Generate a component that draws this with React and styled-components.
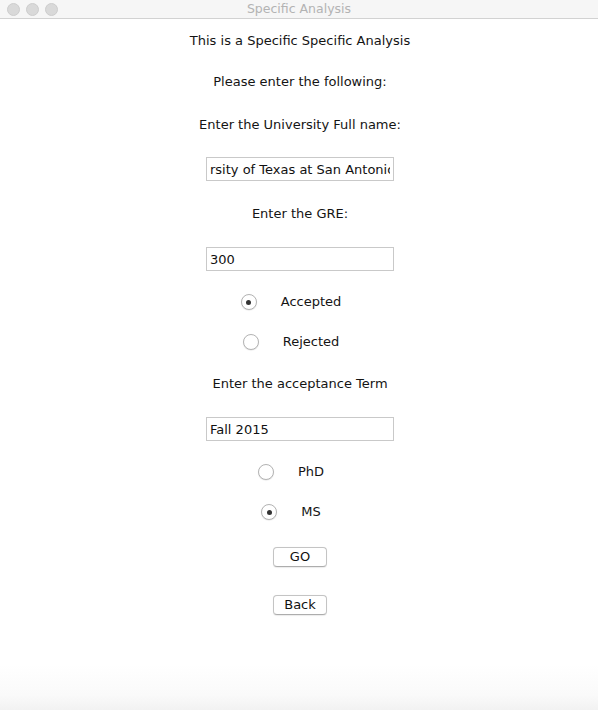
import React from 'react';
import styled, { createGlobalStyle } from 'styled-components';

const GlobalStyle = createGlobalStyle`
  html, body {
    margin: 0;
    padding: 0;
    background: #fff;
  }
  body {
    font-family: 'DejaVu Sans', 'Liberation Sans', sans-serif;
    color: #111;
  }
`;

const App = () => {
  return (
    <>
      <GlobalStyle />
      <Window>
        <TitleBar>
          <Lights>
            <Light />
            <Light />
            <Light />
          </Lights>
          <WindowTitle>Specific Analysis</WindowTitle>
        </TitleBar>

        <Form>
          <Label $mt={14}>This is a Specific Specific Analysis</Label>
          <Label $mt={25}>Please enter the following:</Label>
          <Label $mt={27}>Enter the University Full name:</Label>
          <Field $mt={24} defaultValue="rsity of Texas at San Antonio" />
          <Label $mt={25}>Enter the GRE:</Label>
          <Field $mt={25} defaultValue="300" />

          <RadioRow $mt={22}>
            <Radio $checked />
            <RadioLabel>Accepted</RadioLabel>
          </RadioRow>
          <RadioRow $mt={22}>
            <Radio />
            <RadioLabel>Rejected</RadioLabel>
          </RadioRow>

          <Label $mt={25}>Enter the acceptance Term</Label>
          <Field $mt={25} defaultValue="Fall 2015" />

          <RadioRow $mt={22}>
            <Radio />
            <RadioLabel>PhD</RadioLabel>
          </RadioRow>
          <RadioRow $mt={22}>
            <Radio $checked />
            <RadioLabel>MS</RadioLabel>
          </RadioRow>

          <PushButton $mt={26}>GO</PushButton>
          <PushButton $mt={28}>Back</PushButton>
        </Form>
      </Window>
    </>
  );
};

export default App;

const Window = styled.div`
  width: 598px;
  height: 710px;
  display: flex;
  flex-direction: column;
  overflow: hidden;
  background: linear-gradient(to bottom, #fff 0, #fff 665px, #fafafa 695px, #f2f2f2 710px);
`;

const TitleBar = styled.div`
  height: 18px;
  flex: 0 0 18px;
  background: #f6f6f6;
  border-bottom: 1px solid #d2d2d2;
  display: flex;
  align-items: center;
  justify-content: center;
  position: relative;
`;

const Lights = styled.div`
  position: absolute;
  left: 7px;
  top: 3px;
  display: flex;
  gap: 6px;
`;

const Light = styled.span`
  width: 11px;
  height: 11px;
  border-radius: 50%;
  background: #d9d9d9;
  border: 0.5px solid #cdcdcd;
`;

const WindowTitle = styled.div`
  font-family: 'DejaVu Sans', 'Liberation Sans', sans-serif;
  font-size: 12.5px;
  color: #b3b3b3;
  line-height: 18px;
`;

const Form = styled.div`
  display: flex;
  flex-direction: column;
  align-items: center;
  padding-left: 2px;
`;

const Label = styled.div`
  margin-top: ${({ $mt }) => $mt}px;
  font-size: 13px;
  line-height: 16px;
  height: 16px;
  color: #141414;
  white-space: nowrap;
`;

const Field = styled.input`
  margin-top: ${({ $mt }) => $mt}px;
  box-sizing: border-box;
  width: 188px;
  height: 24px;
  padding: 0 3px;
  border: 1px solid #c9c9c9;
  border-radius: 0;
  background: #fff;
  font-family: 'DejaVu Sans', 'Liberation Sans', sans-serif;
  font-size: 13px;
  color: #111;
  outline: none;
`;

const RadioRow = styled.div`
  margin-top: ${({ $mt }) => $mt}px;
  height: 18px;
  display: flex;
  align-items: center;
  gap: 24px;
  transform: translateX(-9px);
`;

const Radio = styled.span`
  box-sizing: border-box;
  width: 16px;
  height: 16px;
  border-radius: 50%;
  border: 1px solid #b4b4b4;
  background: #fff;
  box-shadow: 0 0.5px 1px rgba(0, 0, 0, 0.12);
  display: flex;
  align-items: center;
  justify-content: center;

  &::after {
    content: '';
    width: 5px;
    height: 5px;
    border-radius: 50%;
    background: #333;
    display: ${({ $checked }) => ($checked ? 'block' : 'none')};
  }
`;

const RadioLabel = styled.span`
  font-size: 13px;
  line-height: 16px;
  color: #141414;
`;

const PushButton = styled.button`
  margin-top: ${({ $mt }) => $mt}px;
  box-sizing: border-box;
  width: 54px;
  height: 20px;
  padding: 0;
  border: 1px solid #c4c4c4;
  border-bottom-color: #adadad;
  border-radius: 4px;
  background: #fff;
  box-shadow: 0 0.5px 1px rgba(0, 0, 0, 0.08);
  font-family: 'DejaVu Sans', 'Liberation Sans', sans-serif;
  font-size: 13px;
  color: #111;
  line-height: 18px;
`;
